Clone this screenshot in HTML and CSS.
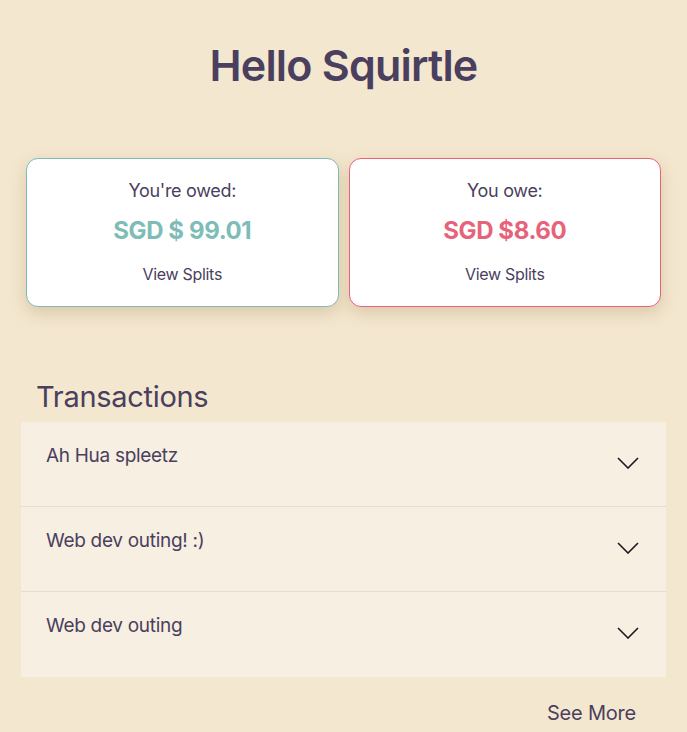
FILE: index.html
```html
<!DOCTYPE html>
<html>
<head>
<meta charset="utf-8">
<link rel="stylesheet" href="styles.css">
</head>
<body>
<main class="page">
  <h1 class="title">Hello Squirtle</h1>
  <section class="cards">
    <div class="card card-owed">
      <div class="card-label">You're owed:</div>
      <div class="card-amount">SGD $ 99.01</div>
      <div class="card-link">View Splits</div>
    </div>
    <div class="card card-owe">
      <div class="card-label">You owe:</div>
      <div class="card-amount">SGD $8.60</div>
      <div class="card-link">View Splits</div>
    </div>
  </section>
  <h2 class="tx-heading">Transactions</h2>
  <section class="accordion">
    <div class="acc-item">
      <span class="acc-title">Ah Hua spleetz</span>
      <svg class="chev" width="22" height="12" viewBox="0 0 22 12"><path d="M1 1 L11 11 L21 1" fill="none" stroke="#1c1a1f" stroke-width="1.6"/></svg>
    </div>
    <div class="acc-item">
      <span class="acc-title">Web dev outing! :)</span>
      <svg class="chev" width="22" height="12" viewBox="0 0 22 12"><path d="M1 1 L11 11 L21 1" fill="none" stroke="#1c1a1f" stroke-width="1.6"/></svg>
    </div>
    <div class="acc-item">
      <span class="acc-title">Web dev outing</span>
      <svg class="chev" width="22" height="12" viewBox="0 0 22 12"><path d="M1 1 L11 11 L21 1" fill="none" stroke="#1c1a1f" stroke-width="1.6"/></svg>
    </div>
  </section>
  <div class="see-more-row"><span class="see-more">See More</span></div>
</main>
</body>
</html>
```
FILE: styles.css
```css
html, body {
  margin: 0;
  padding: 0;
  background: #f4e7cf;
}
body {
  font-family: Inter, "Noto Sans", sans-serif;
  color: #4a3f5e;
}
.page {
  display: flex;
  flex-direction: column;
}
.title {
  margin: 38px 0 0;
  text-align: center;
  font-size: 43px;
  line-height: 54px;
  font-weight: 600;
  letter-spacing: -0.8px;
  color: #4a3f5e;
}
.cards {
  display: grid;
  grid-template-columns: 1fr 1fr;
  gap: 10px;
  margin: 66px 26px 0;
}
.card {
  background: #ffffff;
  border-radius: 12px;
  height: 149px;
  box-sizing: border-box;
  display: flex;
  flex-direction: column;
  align-items: center;
  padding-top: 20px;
  box-shadow: 0 6px 16px rgba(160, 130, 80, 0.3);
}
.card-owed { border: 1px solid #7dbcb7; }
.card-owe { border: 1px solid #e6637a; }
.card-label {
  font-size: 18px;
  line-height: 24px;
  letter-spacing: -0.3px;
}
.card-amount {
  margin-top: 13px;
  font-size: 24px;
  line-height: 30px;
  font-weight: 700;
  letter-spacing: -0.4px;
}
.card-owed .card-amount { color: #7dbcb7; }
.card-owe .card-amount { color: #e6637a; }
.card-link {
  margin-top: 18px;
  font-size: 16px;
  line-height: 20px;
  letter-spacing: -0.3px;
}
.tx-heading {
  margin: 72px 0 0 36px;
  font-size: 29px;
  line-height: 36px;
  font-weight: 400;
  letter-spacing: -0.3px;
}
.accordion {
  margin: 7px 21px 0;
  background: #f7efe1;
}
.acc-item {
  height: 85px;
  box-sizing: border-box;
  display: flex;
  justify-content: space-between;
  align-items: flex-start;
  padding: 22px 27px 0 25px;
  border-bottom: 1px solid #e2ddd6;
}
.acc-item:last-child { border-bottom: none; }
.acc-title {
  font-size: 19px;
  line-height: 24px;
  letter-spacing: -0.3px;
}
.chev {
  margin-top: 13px;
}
.see-more-row {
  display: flex;
  justify-content: flex-end;
  padding: 23px 51px 0 0;
}
.see-more {
  font-size: 20px;
  line-height: 26px;
  letter-spacing: -0.2px;
}
```
